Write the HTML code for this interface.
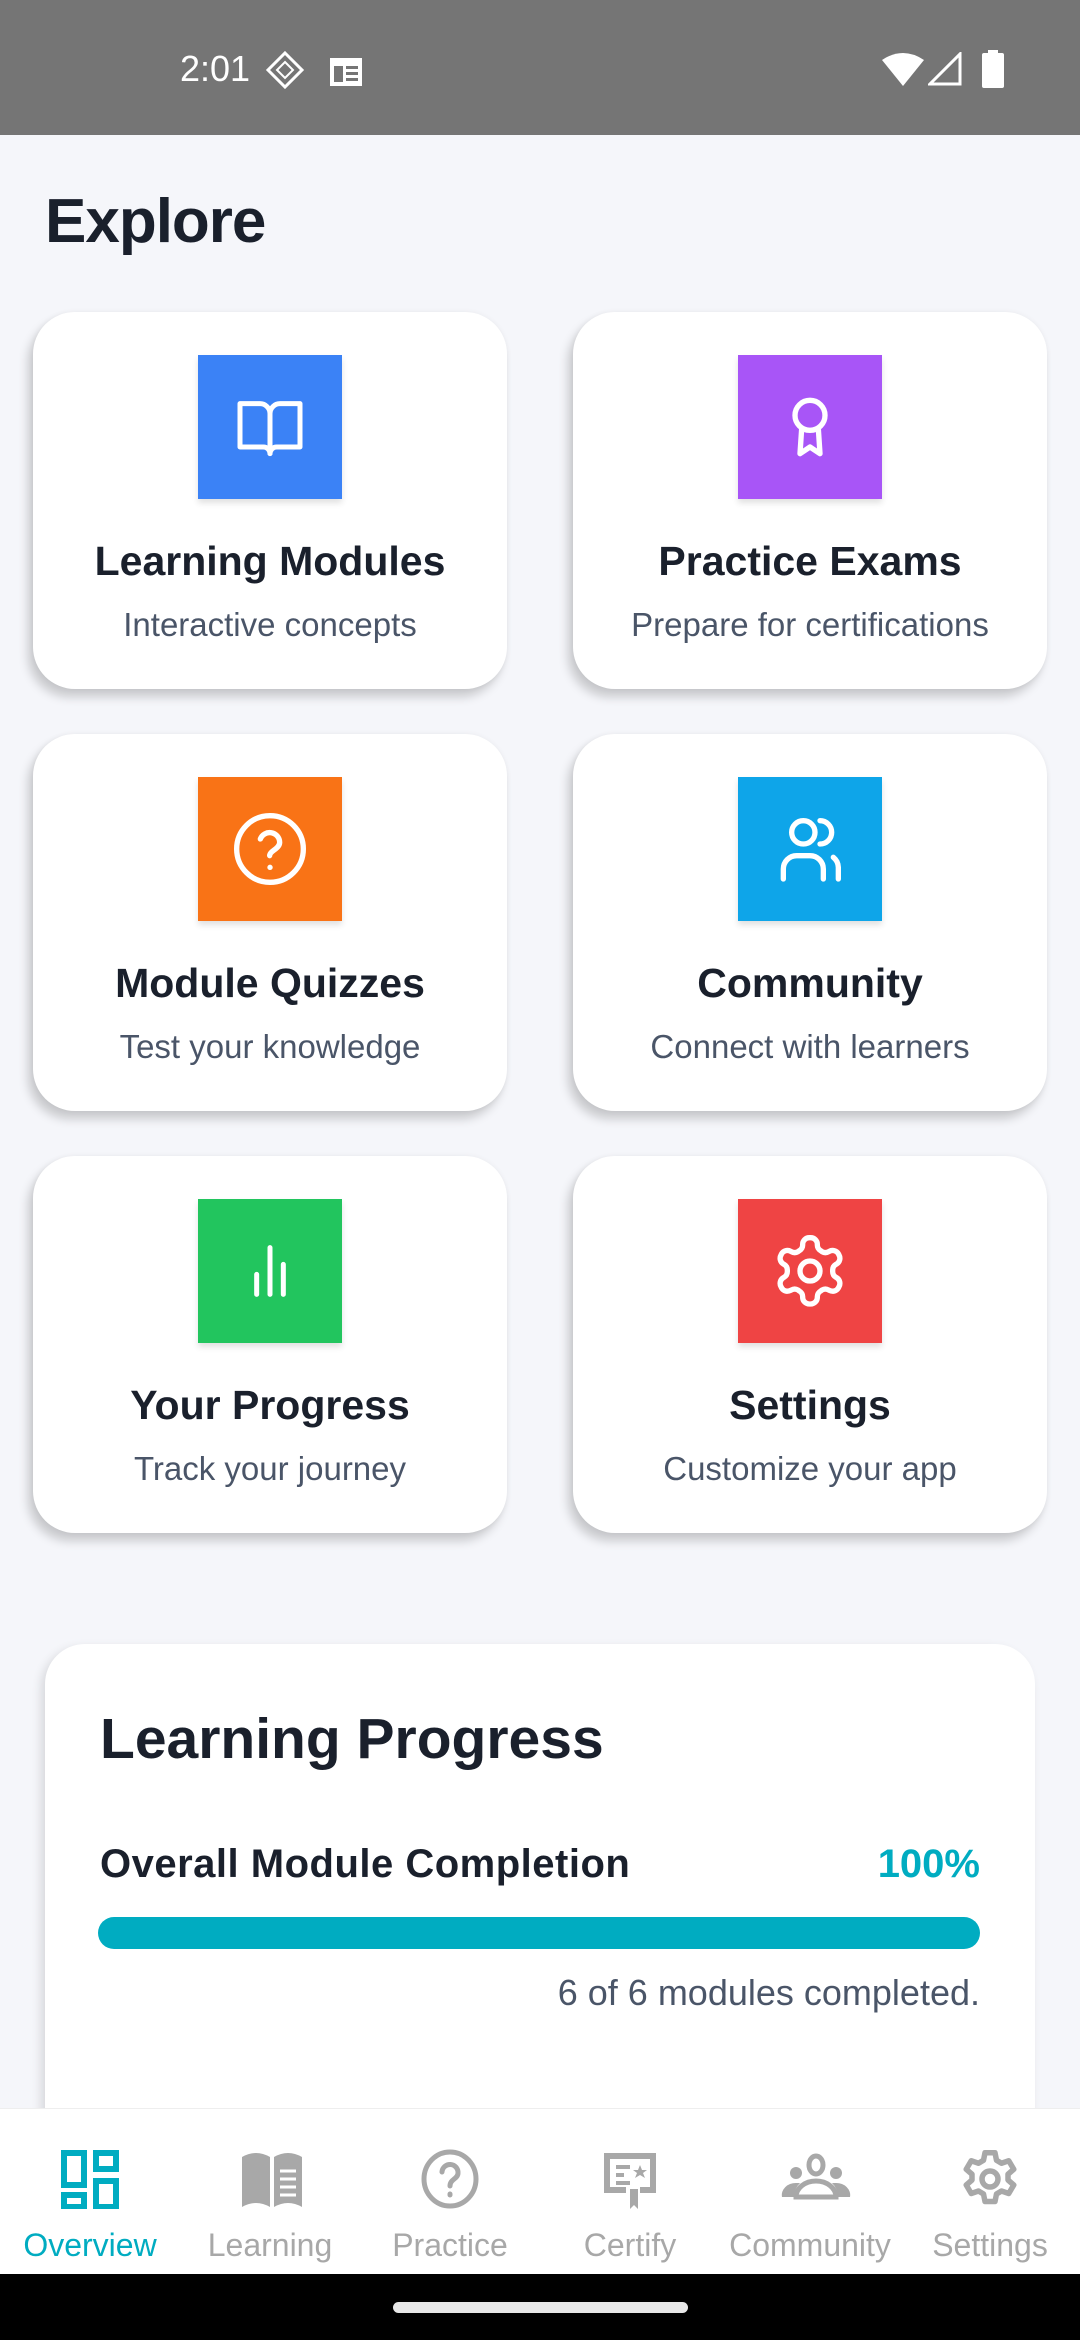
<!DOCTYPE html>
<html><head><meta charset="utf-8"><style>
*{box-sizing:border-box;margin:0;padding:0}
body{width:1080px;height:2340px;overflow:hidden;background:#f5f6fa;font-family:"Liberation Sans",sans-serif;position:relative}
.status{position:absolute;left:0;top:0;width:1080px;height:135px;background:#757575;color:#fff}
.time{position:absolute;left:180px;top:48px;font-size:36px}
h1{position:absolute;left:45px;top:186px;font-size:62px;font-weight:bold;color:#1a202c;letter-spacing:-1px}
.card{position:absolute;width:474px;height:377px;background:#fff;border-radius:42px;box-shadow:-5px 8px 10px rgba(0,0,0,.18),0 0 6px rgba(0,0,0,.05);text-align:center}
.sq{position:absolute;left:165px;top:43px;width:144px;height:144px;box-shadow:0 4px 6px rgba(0,0,0,.12);display:flex;align-items:center;justify-content:center}
.t{position:absolute;left:0;right:0;top:226px;font-size:41px;font-weight:bold;color:#1a202c}
.s{position:absolute;left:0;right:0;top:294px;font-size:33px;color:#4a5568}
.prog{position:absolute;left:45px;top:1644px;width:990px;height:600px;background:#fff;border-radius:40px;box-shadow:-4px 4px 10px rgba(0,0,0,.12)}
.nav{position:absolute;left:0;top:2108px;width:1080px;height:166px;background:#fff;border-top:1px solid #eee}
.it{position:absolute;top:0;width:180px;text-align:center}
.it svg{position:absolute;left:60px;top:40px}
.it span{position:absolute;left:-10px;right:-10px;top:118px;font-size:32px;color:#a8a8a8}
.bar{position:absolute;left:0;top:2274px;width:1080px;height:66px;background:#000}
</style></head><body>
<div class="status">
<div class="time">2:01</div>
<svg style="position:absolute;left:265px;top:50px" width="40" height="40" viewBox="0 0 40 40" fill="none" stroke="#fff" stroke-width="3"><path d="M20 3L37 20L20 37L3 20Z"/><path d="M20 12L28 20L20 28L12 20Z" stroke-width="2"/></svg>
<svg style="position:absolute;left:328px;top:56px" width="36" height="32" viewBox="0 0 36 32" fill="#fff"><path d="M2 2h32v28H2z M6 10v16h9V10z M18 10v3h12v-3z M18 16v3h12v-3z M18 22v3h12v-3z" fill-rule="evenodd"/></svg>
<svg style="position:absolute;left:882px;top:52px" width="42" height="34" viewBox="0 0 42 34" fill="#fff"><path d="M0 8Q21 -6 42 8L21 34Z"/></svg>
<svg style="position:absolute;left:928px;top:52px" width="34" height="34" viewBox="0 0 34 34"><path d="M32 2V32H2Z" fill="none" stroke="#fff" stroke-width="3"/></svg>
<svg style="position:absolute;left:982px;top:50px" width="22" height="38" viewBox="0 0 22 38" fill="#fff"><rect x="6" y="0" width="10" height="4"/><rect x="0" y="3" width="22" height="35" rx="2"/></svg>
</div>
<h1>Explore</h1>

<div class="card" style="left:33px;top:312px"><div class="sq" style="background:#3b82f6"><svg width="80" height="80" viewBox="0 0 24 24" fill="none" stroke="#fff" stroke-width="1.5" stroke-linejoin="round"><path d="M3 5h6a3 3 0 0 1 3 3v12a2 2 0 0 0-2-2H3z"/><path d="M21 5h-6a3 3 0 0 0-3 3v12a2 2 0 0 1 2-2h7z"/></svg></div><div class="t">Learning Modules</div><div class="s">Interactive concepts</div></div>
<div class="card" style="left:573px;top:312px"><div class="sq" style="background:#a855f7"><svg width="80" height="80" viewBox="0 0 24 24" fill="none" stroke="#fff" stroke-width="1.6" stroke-linejoin="round"><circle cx="12" cy="8.5" r="4.5"/><path d="M9.5 12.5L9 20l3-2 3 2-.5-7.5"/></svg></div><div class="t">Practice Exams</div><div class="s">Prepare for certifications</div></div>

<div class="card" style="left:33px;top:734px"><div class="sq" style="background:#f97316"><svg width="80" height="80" viewBox="0 0 24 24" fill="none" stroke="#fff" stroke-width="1.6" stroke-linecap="round"><circle cx="12" cy="12" r="10"/><path d="M9.1 9a3 3 0 0 1 5.8 1c0 2-3 2.5-3 4"/><path d="M12 17.5h.01"/></svg></div><div class="t">Module Quizzes</div><div class="s">Test your knowledge</div></div>
<div class="card" style="left:573px;top:734px"><div class="sq" style="background:#0ea5e9"><svg width="80" height="80" viewBox="0 0 24 24" fill="none" stroke="#fff" stroke-width="1.6" stroke-linecap="round"><circle cx="10" cy="7" r="3.5"/><path d="M4 21v-3a4 4 0 0 1 4-4h4a4 4 0 0 1 4 4v3"/><path d="M15 3.5a3.5 3.5 0 0 1 0 7"/><path d="M19 14.5a4 4 0 0 1 1.5 3V21"/></svg></div><div class="t">Community</div><div class="s">Connect with learners</div></div>

<div class="card" style="left:33px;top:1156px"><div class="sq" style="background:#22c55e"><svg width="80" height="80" viewBox="0 0 24 24" fill="none" stroke="#fff" stroke-width="1.5" stroke-linecap="round"><path d="M8 19v-6M12 19V5M16 19v-9"/></svg></div><div class="t">Your Progress</div><div class="s">Track your journey</div></div>
<div class="card" style="left:573px;top:1156px"><div class="sq" style="background:#ef4444"><svg width="80" height="80" viewBox="0 0 24 24" fill="none" stroke="#fff" stroke-width="1.6" stroke-linejoin="round"><path d="M12.2 2h-.4a2 2 0 0 0-2 2v.2a2 2 0 0 1-1 1.7l-.4.3a2 2 0 0 1-2 0l-.2-.1a2 2 0 0 0-2.7.7l-.2.4a2 2 0 0 0 .7 2.7l.2.1a2 2 0 0 1 1 1.7v.5a2 2 0 0 1-1 1.7l-.2.1a2 2 0 0 0-.7 2.7l.2.4a2 2 0 0 0 2.7.7l.2-.1a2 2 0 0 1 2 0l.4.3a2 2 0 0 1 1 1.7v.2a2 2 0 0 0 2 2h.4a2 2 0 0 0 2-2v-.2a2 2 0 0 1 1-1.7l.4-.3a2 2 0 0 1 2 0l.2.1a2 2 0 0 0 2.7-.7l.2-.4a2 2 0 0 0-.7-2.7l-.2-.1a2 2 0 0 1-1-1.7v-.5a2 2 0 0 1 1-1.7l.2-.1a2 2 0 0 0 .7-2.7l-.2-.4a2 2 0 0 0-2.7-.7l-.2.1a2 2 0 0 1-2 0l-.4-.3a2 2 0 0 1-1-1.7V4a2 2 0 0 0-2-2z"/><circle cx="12" cy="12" r="3"/></svg></div><div class="t">Settings</div><div class="s">Customize your app</div></div>

<div class="prog">
<div style="position:absolute;left:55px;top:62px;font-size:57px;font-weight:bold;color:#1a202c">Learning Progress</div>
<div style="position:absolute;left:55px;top:198px;font-size:40px;font-weight:bold;color:#1a202c;letter-spacing:0.5px">Overall Module Completion</div>
<div style="position:absolute;right:55px;top:198px;font-size:40px;font-weight:bold;color:#00acc1">100%</div>
<div style="position:absolute;left:53px;top:273px;width:882px;height:32px;border-radius:16px;background:#00acc1"></div>
<div style="position:absolute;right:55px;top:328px;font-size:36px;color:#4a5568">6 of 6 modules completed.</div>
</div>

<div class="nav">
<div class="it" style="left:0"><svg width="60" height="60" viewBox="0 0 60 60" fill="none" stroke="#00acc1" stroke-width="6"><rect x="4" y="4" width="20" height="32"/><rect x="36" y="4" width="20" height="16"/><rect x="36" y="32" width="20" height="26"/><rect x="4" y="46" width="20" height="12"/></svg><span style="color:#00acc1">Overview</span></div>
<div class="it" style="left:180px"><svg width="64" height="60" viewBox="0 0 64 60" fill="#a8a8a8"><path d="M2 8Q16 0 30 8V58Q16 50 2 58Z"/><path d="M34 8Q48 0 62 8V58Q48 50 34 58Z"/><path d="M40 22h16M40 30h16M40 38h16M40 46h16" stroke="#fff" stroke-width="3"/></svg><span>Learning</span></div>
<div class="it" style="left:360px"><svg width="60" height="60" viewBox="0 0 60 60" fill="none" stroke="#a8a8a8" stroke-width="5" stroke-linecap="round"><ellipse cx="30" cy="30" rx="26" ry="27"/><path d="M22 23a8 8 0 0 1 16 1c0 6-8 6-8 13"/><path d="M30 45v1"/></svg><span>Practice</span></div>
<div class="it" style="left:540px"><svg width="60" height="60" viewBox="0 0 60 60" fill="#a8a8a8"><path d="M4 4h52v40H40v-6h10V10H10v28h16v6H4z"/><rect x="16" y="16" width="14" height="4"/><rect x="16" y="24" width="8" height="4"/><rect x="16" y="32" width="14" height="4"/><path d="M40 16l2 5 5 0-4 3 2 5-5-3-5 3 2-5-4-3 5 0z"/><path d="M30 40h8v20l-4-4-4 4z"/></svg><span>Certify</span></div>
<div class="it" style="left:720px"><svg width="72" height="60" viewBox="0 0 72 60" fill="#a8a8a8"><ellipse cx="36" cy="16" rx="7" ry="9" fill="none" stroke="#a8a8a8" stroke-width="5"/><circle cx="16" cy="24" r="6"/><circle cx="56" cy="24" r="6"/><path d="M2 48a14 12 0 0 1 14-14h4a20 20 0 0 0-6 14z"/><path d="M70 48a14 12 0 0 0-14-14h-4a20 20 0 0 1 6 14z"/><path d="M16 48a20 16 0 0 1 40 0z" fill="none" stroke="#a8a8a8" stroke-width="5"/></svg><span>Community</span></div>
<div class="it" style="left:900px"><svg width="60" height="60" viewBox="0 0 24 24" fill="none" stroke="#a8a8a8" stroke-width="2.2" stroke-linejoin="round"><path d="M10 1.5h4l.6 3 2 1.2 2.9-1 2 3.4-2.3 2v2.3l2.3 2-2 3.4-2.9-1-2 1.2-.6 3h-4l-.6-3-2-1.2-2.9 1-2-3.4 2.3-2v-2.3l-2.3-2 2-3.4 2.9 1 2-1.2z"/><circle cx="12" cy="12" r="3.2"/></svg><span>Settings</span></div>
</div>
<div class="bar"><div style="position:absolute;left:393px;top:28px;width:295px;height:11px;border-radius:6px;background:#e8e8e8"></div></div>
</body></html>
